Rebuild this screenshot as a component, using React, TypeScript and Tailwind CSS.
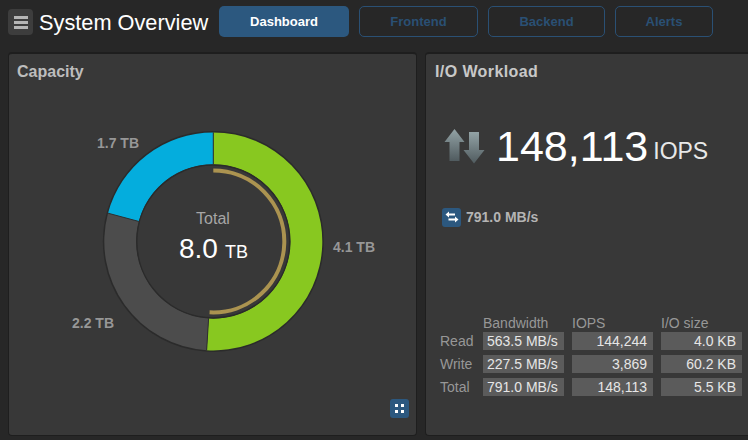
const cx = 213.3
const cy = 241.4

function polar(r: number, deg: number) {
  const a = ((deg - 90) * Math.PI) / 180
  return [cx + r * Math.cos(a), cy + r * Math.sin(a)]
}

function slice(from: number, to: number, ro: number, ri: number) {
  const [x1, y1] = polar(ro, from)
  const [x2, y2] = polar(ro, to)
  const [x3, y3] = polar(ri, to)
  const [x4, y4] = polar(ri, from)
  const large = to - from > 180 ? 1 : 0
  return `M${x1} ${y1}A${ro} ${ro} 0 ${large} 1 ${x2} ${y2}L${x3} ${y3}A${ri} ${ri} 0 ${large} 0 ${x4} ${y4}Z`
}

function arc(from: number, to: number, r: number) {
  const [x1, y1] = polar(r, from)
  const [x2, y2] = polar(r, to)
  return `M${x1} ${y1}A${r} ${r} 0 ${to - from > 180 ? 1 : 0} 1 ${x2} ${y2}`
}

const tabs = [
  { label: "Frontend", width: "w-[119px]" },
  { label: "Backend", width: "w-[117px]" },
  { label: "Alerts", width: "w-[98px]" },
]

const rows = [
  { label: "Read", bandwidth: "563.5 MB/s", iops: "144,244", size: "4.0 KB" },
  { label: "Write", bandwidth: "227.5 MB/s", iops: "3,869", size: "60.2 KB" },
  { label: "Total", bandwidth: "791.0 MB/s", iops: "148,113", size: "5.5 KB" },
]

function CapacityChart() {
  return (
    <svg width="409" height="383" viewBox="8 52 409 383" className="absolute -left-px -top-0.5">
      <circle cx={cx} cy={cy} r="110.5" fill="#2b2b2b" />
      <path d={slice(0, 183.5, 109, 77)} fill="#88c820" />
      <path d={slice(183.5, 285, 109, 77)} fill="#4c4c4c" />
      <path d={slice(285, 360, 109, 77)} fill="#04addd" />
      <circle cx={cx} cy={cy} r="76.5" fill="#383838" stroke="#2b2b2b" strokeWidth="1.5" />
      {[0, 183.5, 285].map((deg) => {
        const [x1, y1] = polar(77, deg)
        const [x2, y2] = polar(109, deg)
        return <line key={deg} x1={x1} y1={y1} x2={x2} y2={y2} stroke="#2f2f2f" strokeWidth="1" />
      })}
      <path d={arc(0, 183, 71)} fill="none" stroke="#ab9350" strokeWidth="4" />
      <g fontFamily="'Liberation Sans', Arial, sans-serif">
        <text x="97" y="148" fontSize="14" fontWeight="700" fill="#979797">1.7 TB</text>
        <text x="333" y="252" fontSize="14" fontWeight="700" fill="#979797">4.1 TB</text>
        <text x="72" y="328" fontSize="14" fontWeight="700" fill="#979797">2.2 TB</text>
        <text x="213" y="224" fontSize="16" textAnchor="middle" fill="#a6a6a6">Total</text>
        <text x="179" y="258" fontSize="28" fill="#ffffff">8.0</text>
        <text x="225" y="258" fontSize="18" fill="#ffffff">TB</text>
      </g>
    </svg>
  )
}

function UpDownArrows() {
  return (
    <svg width="41" height="35" viewBox="0 0 41 35">
      <defs>
        <linearGradient id="arrowFill" x1="0" y1="0" x2="0" y2="1">
          <stop offset="0" stopColor="#93a3a6" />
          <stop offset="1" stopColor="#505b5f" />
        </linearGradient>
      </defs>
      <path d="M10.500 0L20.500 13H15.500V32H5.500V13H0.500Z" fill="url(#arrowFill)" />
      <path d="M25 3H35V21H40.500L30 34.500L19.500 21H25Z" fill="url(#arrowFill)" />
    </svg>
  )
}

export default function App() {
  return (
    <div className="w-[748px] h-[440px] overflow-hidden bg-[#272727] font-['Liberation_Sans',Arial,sans-serif]">
      {/* Header */}
      <div className="flex h-[52px] items-start">
        <button className="ml-2 mt-[9px] flex h-[26px] w-[25px] flex-col items-center justify-center gap-[2px] rounded-sm bg-[#3d3d3d]">
          <span className="h-[3px] w-[14px] bg-[#b5b5b5]" />
          <span className="h-[3px] w-[14px] bg-[#b5b5b5]" />
          <span className="h-[3px] w-[14px] bg-[#b5b5b5]" />
        </button>
        <h1 className="ml-[6px] mt-[9px] w-[169px] whitespace-nowrap text-[21.75px] leading-[28px] text-white">System Overview</h1>
        <button className="ml-[11px] mt-[6px] h-[31px] w-[130px] rounded-[5px] bg-[#2c587f] text-[13px] font-bold text-white">
          Dashboard
        </button>
        <div className="ml-[10px] mt-[6px] flex gap-[10px]">
          {tabs.map((tab) => (
            <button
              key={tab.label}
              className={`h-[31px] ${tab.width} rounded-[5px] border border-[#2a5074] text-[13px] font-bold text-[#2a5074]`}
            >
              {tab.label}
            </button>
          ))}
        </div>
      </div>

      <div className="flex gap-2 pl-2">
        {/* Capacity */}
        <section className="relative h-[384px] w-[409px] shrink-0 rounded-sm border-t-2 border-r border-b border-l border-[#1e1e1e] bg-[#383838]">
          <CapacityChart />
          <h2 className="relative ml-2 mt-[8px] text-base font-bold leading-5 text-[#bdbdbd]">Capacity</h2>
          <button className="absolute bottom-[17px] right-[7px] grid h-[19px] w-[19px] grid-cols-[3px_3px] place-content-center gap-[3px] rounded-[3px] bg-[#2c587f]">
            <span className="h-[3px] w-[3px] bg-white" />
            <span className="h-[3px] w-[3px] bg-white" />
            <span className="h-[3px] w-[3px] bg-white" />
            <span className="h-[3px] w-[3px] bg-white" />
          </button>
        </section>

        {/* I/O Workload */}
        <section className="flex h-[384px] w-[340px] shrink-0 flex-col rounded-sm border-t-2 border-b border-l border-[#1e1e1e] bg-[#383838]">
          <h2 className="ml-[9px] mt-[8px] text-base font-bold leading-5 tracking-[0.4px] text-[#c8c8c8]">I/O Workload</h2>

          <div className="ml-[18px] mt-[40px] flex items-center">
            <UpDownArrows />
            <span className="ml-[11px] text-[43px] leading-[48px] text-white">148,113</span>
            <span className="ml-[5px] mt-[10px] text-[23px] leading-[28px] text-[#e8e8e8]">IOPS</span>
          </div>

          <div className="ml-[16px] mt-[37px] flex items-center">
            <span className="flex h-[19px] w-[19px] items-center justify-center rounded-[3px] bg-[#2c587f]">
              <svg width="14" height="12" viewBox="0 0 14 12" fill="#ffffff">
                <path d="M4 0.500V2.500H10V4.500H4V6.500L0.500 3.500Z" />
                <path d="M10 5.500V7.500H3.500V9.500H10V11.500L13.500 8.500Z" />
              </svg>
            </span>
            <span className="ml-[5px] text-sm font-bold leading-5 text-[#b4b4b4]">791.0 MB/s</span>
          </div>

          <div className="mt-[87px] grid grid-cols-[35px_81px_81px_81px] gap-x-2 gap-y-[5px] pl-[14px] text-sm leading-[18px]">
            <span />
            <span className="-mb-[5px] text-[#979797]">Bandwidth</span>
            <span className="-mb-[5px] text-[#979797]">IOPS</span>
            <span className="-mb-[5px] text-[#979797]">I/O size</span>
            {rows.map((row) => (
              <div key={row.label} className="contents">
                <span className="-mr-2 text-[#979797]">{row.label}</span>
                <span className="bg-[#5b5b5b] pl-1 text-[#e6e6e6]">{row.bandwidth}</span>
                <span className="bg-[#5b5b5b] pr-1.5 text-right text-[#e6e6e6]">{row.iops}</span>
                <span className="bg-[#5b5b5b] pr-1.5 text-right text-[#e6e6e6]">{row.size}</span>
              </div>
            ))}
          </div>
        </section>
      </div>
    </div>
  )
}
